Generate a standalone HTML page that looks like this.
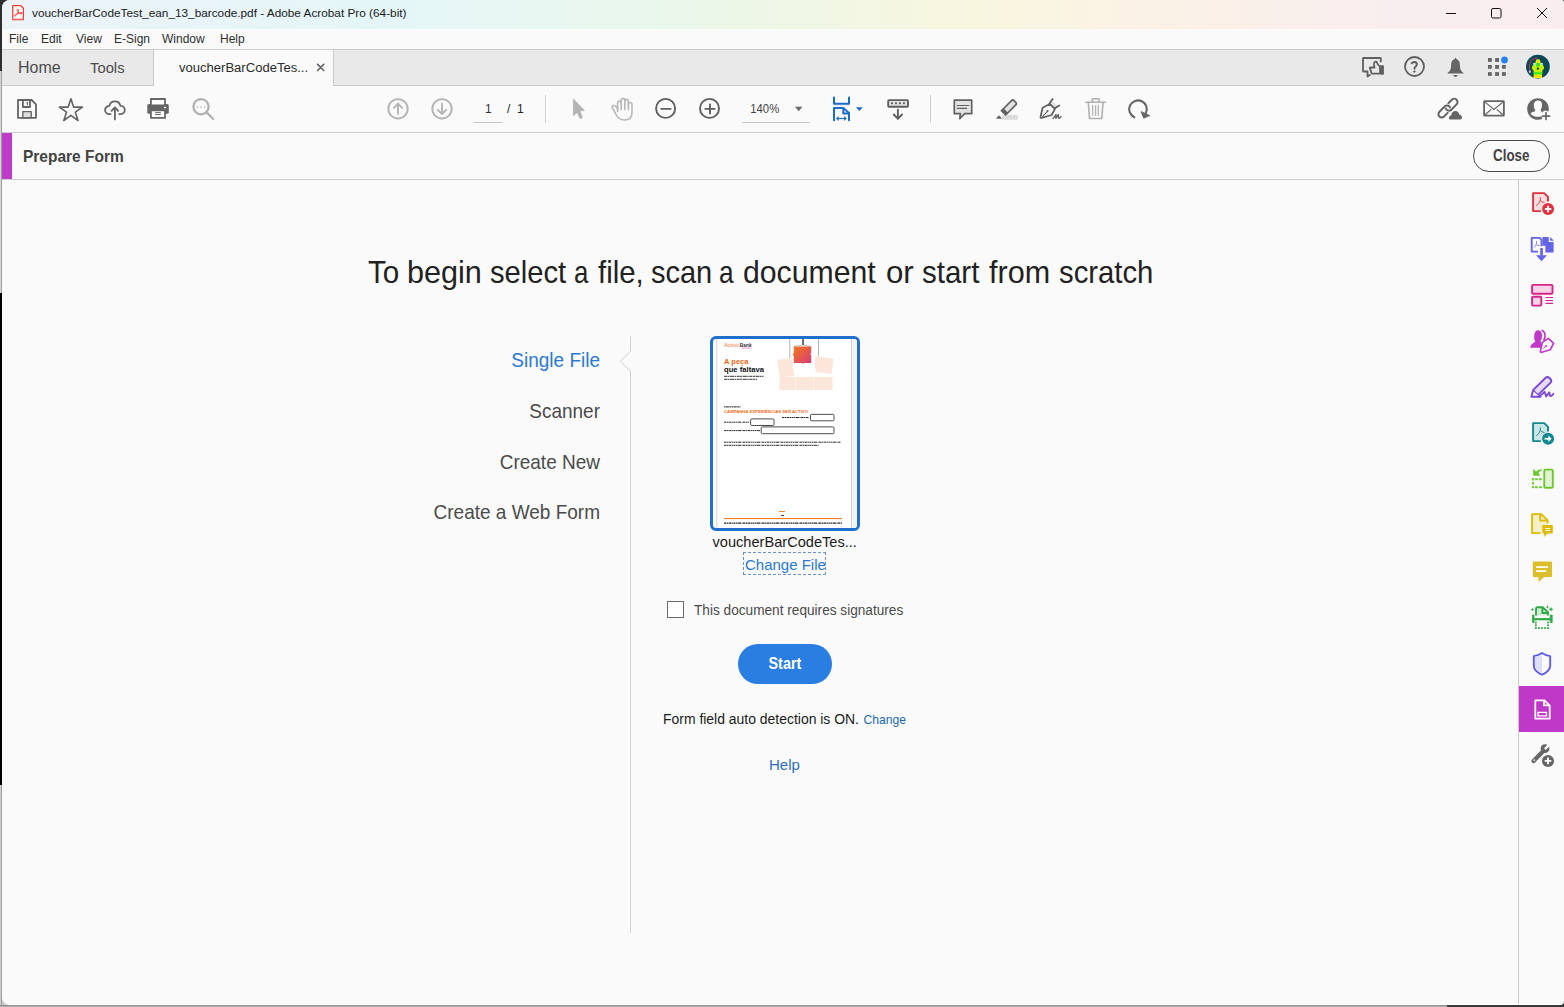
<!DOCTYPE html>
<html><head><meta charset="utf-8">
<style>
*{margin:0;padding:0;box-sizing:border-box}
html,body{width:1564px;height:1007px;overflow:hidden;background:#c9c9c9}
body{font-family:"Liberation Sans",sans-serif;position:relative}
.a{position:absolute;white-space:nowrap;line-height:1}
svg{position:absolute;overflow:visible}
#edge{position:absolute;left:0;top:0;width:2px;height:1007px;background:linear-gradient(180deg,#2e2e2e 0,#2e2e2e 71px,#d4d4d4 71px,#d4d4d4 293px,#000 293px,#000 785px,#cccccc 785px)}
#edge2{position:absolute;left:1px;top:71px;width:1px;height:222px;background:#a0a0a0}
#edge3{position:absolute;left:1px;top:785px;width:1px;height:221px;background:#a0a0a0}
#trc{position:absolute;left:1554px;top:0;width:10px;height:10px;background:#333}
#tlc{position:absolute;left:0;top:0;width:12px;height:12px;background:#2e2e2e}
#win{position:absolute;left:2px;top:0;width:1562px;height:1005px;background:#fafafa;border-radius:8px 3px 4px 8px;overflow:hidden;border-bottom:1px solid #fdfdfd}
#bot1{position:absolute;left:0;top:1005px;width:1447px;height:1px;background:#959595}
#bot2{position:absolute;left:0;top:1006px;width:1447px;height:1px;background:#ababab}
#bot3{position:absolute;left:1447px;top:995px;width:117px;height:12px;background:#3a3a3a}
#title{position:absolute;left:0;top:0;width:1562px;height:29px;background:linear-gradient(90deg,#ebf3f9 0%,#e8f4f9 12%,#e4f6f8 25%,#ebf7e9 45%,#f8f6df 62%,#fbf2e5 72%,#f9eeee 88%,#f9edf0 100%)}
#menu{position:absolute;left:0;top:29px;width:1562px;height:20px;background:#fafafa}
#tabbar{position:absolute;left:0;top:49px;width:1562px;height:37px;background:#e9e9e9;border-top:1px solid #cfcfcf;border-bottom:1px solid #cacaca}
#acttab{position:absolute;left:151px;top:49px;width:181px;height:37px;background:#fafafa;border-left:1px solid #cacaca;border-right:1px solid #cacaca;border-top:1px solid #cfcfcf}
#tool{position:absolute;left:0;top:86px;width:1562px;height:47px;background:#fafafa;border-bottom:1px solid #cdcdcd}
#prep{position:absolute;left:0;top:133px;width:1562px;height:47px;background:#fafafa;border-bottom:1px solid #cdcdcd}
#purp{position:absolute;left:0;top:133px;width:10px;height:46px;background:#c03bc9}
#rside{position:absolute;left:1516px;top:180px;width:1px;height:825px;background:#cbcbcb}
#vline{position:absolute;left:628px;top:336px;width:1px;height:597px;background:#d0d0d0}
.menu{font-size:12px;color:#2e2e2e;top:33px}
.tabt{font-size:16px;color:#4b4b4b;top:60px}
.opt{font-size:19px;color:#4b4b4b;text-align:right;right:964px;transform:scaleY(1.1);transform-origin:0 0}
</style></head><body>
<div id="edge"></div><div id="edge2"></div><div id="edge3"></div><div id="trc"></div><div id="tlc"></div><div id="bot1"></div><div id="bot2"></div><div id="bot3"></div>
<div id="win">
  <div id="title"></div>
  <div id="menu"></div>
  <div id="tabbar"></div>
  <div id="acttab"></div>
  <div id="tool"></div>
  <div id="prep"></div>
  <div id="purp"></div>
  <div id="rside"></div>
  <div id="vline"></div>
</div>
<!-- notch -->
<svg style="left:0;top:0" width="1564" height="1007" viewBox="0 0 1564 1007">
<path d="M630.5,351 L620.5,361.3 L630.5,371.5" fill="#fafafa" stroke="#d0d0d0" stroke-width="1"/>
<path d="M630.5,351.8 V370.8" stroke="#fafafa" stroke-width="1.2"/>
</svg>
<!-- title text -->
<div class="a" id="ttl" style="left:32px;top:8px;font-size:11.8px;color:#1a1a1a">voucherBarCodeTest_ean_13_barcode.pdf - Adobe Acrobat Pro (64-bit)</div>
<!-- menu -->
<div class="a menu" style="left:9px">File</div>
<div class="a menu" style="left:41px">Edit</div>
<div class="a menu" style="left:76px">View</div>
<div class="a menu" style="left:114px">E-Sign</div>
<div class="a menu" style="left:162px">Window</div>
<div class="a menu" style="left:220px">Help</div>
<!-- tabs -->
<div class="a tabt" style="left:18px">Home</div>
<div class="a tabt" style="left:90px;font-size:14.8px;top:61px">Tools</div>
<div class="a" style="left:179px;top:61px;font-size:13.05px;color:#2c2c2c">voucherBarCodeTes...</div>
<svg style="left:0;top:0" width="1564" height="1007" viewBox="0 0 1564 1007"><path d="M317.6,64.4 L323.7,70.5 M323.7,64.4 L317.6,70.5" stroke="#666" stroke-width="1.7" stroke-linecap="round"/></svg>
<!-- toolbar text -->
<div class="a" style="left:485px;top:103px;font-size:12px;color:#333">1</div>
<div class="a" style="left:507px;top:103px;font-size:12px;color:#222">/&nbsp;&nbsp;1</div>
<div class="a" style="left:750.3px;top:103px;font-size:11.3px;color:#444;transform:scaleY(1.06);transform-origin:0 0">140%</div>
<!-- prepare form -->
<div class="a" style="left:23px;top:147.6px;font-size:15.5px;font-weight:bold;color:#434343;transform:scaleY(1.1);transform-origin:0 0">Prepare Form</div>
<div class="a" style="left:1473px;top:140px;width:77px;height:32px;border:1.4px solid #4a4a4a;border-radius:16px"></div>
<div class="a" style="left:1493px;top:148px;font-size:13.4px;font-weight:bold;color:#434343;transform:scaleY(1.19);transform-origin:0 0">Close</div>

<!-- main -->
<div class="a" id="h1" style="left:0;top:256.75px;width:1564px;height:40px;font-size:29.7px;color:#222;transform:scaleY(1.05);transform-origin:0 0"><span class="a" style="left:367.76px;top:0;transform:scaleX(0.996);transform-origin:0 0">To</span><span class="a" style="left:407.42px;top:0;transform:scaleX(1.030);transform-origin:0 0">begin</span><span class="a" style="left:490.44px;top:0;transform:scaleX(0.981);transform-origin:0 0">select</span><span class="a" style="left:574.23px;top:0;transform:scaleX(0.869);transform-origin:0 0">a</span><span class="a" style="left:598.44px;top:0;transform:scaleX(0.989);transform-origin:0 0">file,</span><span class="a" style="left:650.84px;top:0;transform:scaleX(0.976);transform-origin:0 0">scan</span><span class="a" style="left:718.50px;top:0;transform:scaleX(0.884);transform-origin:0 0">a</span><span class="a" style="left:743.26px;top:0;transform:scaleX(1.018);transform-origin:0 0">document</span><span class="a" style="left:886.37px;top:0;transform:scaleX(1.050);transform-origin:0 0">or</span><span class="a" style="left:922.29px;top:0;transform:scaleX(0.994);transform-origin:0 0">start</span><span class="a" style="left:989.26px;top:0;transform:scaleX(1.029);transform-origin:0 0">from</span><span class="a" style="left:1058.59px;top:0;transform:scaleX(0.986);transform-origin:0 0">scratch</span></div>
<div class="a opt" style="top:348.65px;color:#2b79d1">Single File</div>
<div class="a opt" style="top:399.65px">Scanner</div>
<div class="a opt" style="top:450.65px">Create New</div>
<div class="a opt" style="top:500.95px">Create a Web Form</div>

<div class="a" style="left:712.5px;top:535px;font-size:14.6px;color:#1a1a1a">voucherBarCodeTes...</div>
<div class="a" style="left:743px;top:552px;width:83px;height:23px;border:1px dashed #6a94c8"></div>
<div class="a" style="left:745px;top:557px;font-size:15px;color:#2b79d1">Change File</div>

<div class="a" style="left:667px;top:601px;width:17px;height:17px;border:1px solid #6a6a6a;background:#fff"></div>
<div class="a" id="sigt" style="left:694px;top:602.66px;font-size:13.65px;color:#4b4b4b;transform:scaleY(1.12);transform-origin:0 0">This document requires signatures</div>
<div class="a" style="left:738px;top:644px;width:94px;height:40px;border-radius:20px;background:#2a7ee2"></div>
<div class="a" style="left:768.5px;top:655.15px;font-size:14.4px;font-weight:bold;color:#fff;transform:scaleY(1.14);transform-origin:0 0">Start</div>
<div class="a" id="fft" style="left:663px;top:713px;font-size:13.95px;color:#1a1a1a">Form field auto detection is ON.</div>
<div class="a" style="left:863.5px;top:714px;font-size:12.15px;color:#2468b4">Change</div>
<div class="a" style="left:769px;top:757px;font-size:15px;color:#2c6fc2">Help</div>

<!-- thumbnail -->
<div class="a" style="left:710px;top:336px;width:150px;height:195px;border:3px solid #1f6fcc;border-radius:6px;background:#fff;overflow:hidden">
 <div class="a" style="left:138.5px;top:0;width:10px;height:195px;background:#f4f4f4"></div>
</div>
<svg style="left:0;top:0" width="1564" height="1007" viewBox="0 0 1564 1007">
<path d="M716.8,339 V528 M851.5,339 V528" stroke="#c8c8c8" stroke-width="0.8"/>
<!-- logo -->
<text x="724" y="347" font-family="Liberation Sans" font-size="5.6" fill="#f07a3a" textLength="15.5" lengthAdjust="spacingAndGlyphs">Activo</text>
<text x="739.8" y="347" font-family="Liberation Sans" font-size="5.6" font-weight="bold" fill="#333" textLength="12" lengthAdjust="spacingAndGlyphs">Bank</text>
<rect x="741.5" y="347.6" width="10" height="1.1" fill="#f0a0d0"/>
<text x="724" y="364.2" font-family="Liberation Sans" font-size="7" font-weight="bold" fill="#f06a14" textLength="24.5" lengthAdjust="spacingAndGlyphs">A peça</text>
<text x="724" y="372.2" font-family="Liberation Sans" font-size="7" font-weight="bold" fill="#111" textLength="40" lengthAdjust="spacingAndGlyphs">que faltava</text>
<g stroke="#333" stroke-width="1" stroke-dasharray="3 0.5 2 0.6 4 0.5 1.5 0.6">
 <path d="M724,376.3 H763.5"/>
 <path d="M724,379.3 H757"/>
</g>
<!-- puzzle -->
<path d="M789.8,339 V358.5 M818.5,339 V356" stroke="#666" stroke-width="0.5"/>
<path d="M803,339 V345" stroke="#111" stroke-width="1.2"/>
<path d="M777,360 L791,358 L793,365.5 Q791.5,366.5 793,368.5 L794.5,375.5 L780,377.5 Z" fill="#fbe6d9"/>
<path d="M815.5,356 L833.5,358.8 L831.5,374 L815,372 Q816.8,369.5 814.5,367.5 Z" fill="#fbe6d9"/>
<path d="M779.5,377 H832.5 V390 H779.5 Z" fill="#fbe6d9"/>
<path d="M795.5,377 V390 M813.5,377 V390" stroke="#fff" stroke-width="0.5"/>
<defs><linearGradient id="pz" x1="0" y1="0" x2="1" y2="1"><stop offset="0" stop-color="#f27a1c"/><stop offset="1" stop-color="#d83a78"/></linearGradient></defs>
<path d="M793.8,346.4 H811.2 V352.8 Q809.6,354.2 811.2,355.6 V363 H804 Q803,364.4 802,363 H793.8 V355.8 Q791.8,354.6 793.8,353 Z" fill="url(#pz)"/>
<path d="M793.8,346.4 L803,345 L811.2,346.4" stroke="#666" stroke-width="0.4" fill="none"/>
<!-- campaign -->
<path d="M724,406.9 H740.5" stroke="#222" stroke-width="1" stroke-dasharray="1.5 0.4 3 0.5 2 0.4"/>
<text x="724" y="412.6" font-family="Liberation Sans" font-size="4.4" font-weight="bold" fill="#f06a14" textLength="84" lengthAdjust="spacingAndGlyphs">CAMPANHA EXPERIÊNCIAS SER ACTIVO</text>
<g fill="none" stroke="#222" stroke-width="0.8">
 <rect x="810.5" y="414.4" width="23.5" height="6.4" rx="1.2"/>
 <rect x="750.6" y="418.9" width="23.4" height="6.6" rx="1.2"/>
 <rect x="761.2" y="426.9" width="72.8" height="6.8" rx="1.2"/>
</g>
<g stroke="#2a2a2a" stroke-width="1" stroke-dasharray="2 0.5 1.5 0.5 3 0.6 1 0.4">
 <path d="M782,417.5 H809"/>
 <path d="M724,422.2 H749"/>
 <path d="M724,430.6 H760"/>
 <path d="M724,442.2 H841"/>
 <path d="M724,445.3 H819"/>
 <path d="M724,523.2 H842" stroke-width="1.3"/>
</g>
<rect x="781" y="515" width="3" height="0.9" fill="#333"/>
<rect x="779" y="511" width="6" height="0.9" fill="#f07a1c"/>
<rect x="724" y="518" width="118" height="1.1" fill="#f07a1c"/>
</svg>

<svg style="left:0;top:0" width="1564" height="1007" viewBox="0 0 1564 1007">
<!-- pdf app icon -->
<g>
<path d="M12.8,5.6 H20.8 L23.4,8.2 V19.6 H12.8 Z" fill="#fff" stroke="#ea3b32" stroke-width="1.25" stroke-linejoin="round"/>
<rect x="13.5" y="18.2" width="9.2" height="1.2" fill="#f5b5b0"/>
<path d="M14.6,15.8 C15.3,16.3 16.2,15.6 17,14.4 C17.9,13 18.6,11.5 18.6,10.3 C18.6,9.1 17.4,8.7 17.1,9.6 C16.8,10.6 17.6,12.4 19.4,13.3 C20.5,13.9 21.6,14 22.1,13.6 C22.6,13.1 21.9,12.5 21,12.6 C19.2,12.8 16.8,13.6 15.3,14.6 C14.5,15.1 14.3,15.5 14.6,15.8 Z" fill="none" stroke="#ea3b32" stroke-width="0.95"/>
</g>
<!-- window controls -->
<path d="M1446,13.5 H1456" stroke="#111" stroke-width="1"/>
<rect x="1491.5" y="8.5" width="9.5" height="9.5" rx="1.5" fill="none" stroke="#111" stroke-width="1"/>
<path d="M1537,8 L1547,18 M1547,8 L1537,18" stroke="#111" stroke-width="1"/>

<!-- tabbar right icons -->
<g fill="none" stroke="#5f5f5f" stroke-width="1.8" stroke-linejoin="round">
 <path d="M1380.8,62.3 V58.5 Q1380.8,58 1380.3,58 H1363.5 Q1363,58 1363,58.5 V71 Q1363,71.5 1363.5,71.5 H1367.5 V76.5 L1370.5,74.5"/>
 <path d="M1369.8,67.5 H1374.5 Q1373.2,63 1375,61.8 Q1376.5,61 1377,62.6 Q1377.6,65 1380,66.5 V73.6 H1372.5 Q1371.7,73.6 1371.3,72.6 Z"/>
 <circle cx="1414.5" cy="66.5" r="9.5"/>
</g>
<rect x="1380.2" y="65.3" width="3.7" height="9.5" rx="0.8" fill="#5f5f5f"/>
<path d="M1411.6,63.2 Q1412.3,62 1414.5,62 Q1417,62.2 1416.9,64.3 Q1416.7,65.5 1415.4,66.7 Q1414.5,67.6 1414.5,68.7" fill="none" stroke="#5f5f5f" stroke-width="1.9" stroke-linecap="round"/>
<rect x="1413.4" y="70.6" width="2" height="2" fill="#5f5f5f" transform="rotate(45 1414.4 71.6)"/>
<!-- bell -->
<path d="M1455.5,57.8 Q1456.3,57.8 1456.3,59 Q1459.5,60 1459.8,63.5 L1460.2,68.5 Q1460.6,71 1463.5,73 V73.6 H1447.5 V73 Q1450.4,71 1450.8,68.5 L1451.2,63.5 Q1451.5,60 1454.7,59 Q1454.7,57.8 1455.5,57.8 Z" fill="#666"/>
<path d="M1453.2,75 H1457.8 Q1457,77 1455.5,77 Q1454,77 1453.2,75 Z" fill="#666"/>
<!-- apps grid -->
<g fill="#666">
 <rect x="1488" y="58" width="3.8" height="3.9"/><rect x="1495.1" y="58" width="3.9" height="3.9"/>
 <rect x="1488" y="65" width="3.8" height="3.8"/><rect x="1495.1" y="65" width="3.9" height="3.8"/><rect x="1502" y="65" width="3.8" height="3.8"/>
 <rect x="1488" y="72.1" width="3.8" height="3.8"/><rect x="1495.1" y="72.1" width="3.9" height="3.8"/><rect x="1502" y="72.1" width="3.8" height="3.8"/>
</g>
<circle cx="1504.5" cy="60" r="3.4" fill="#2680eb"/>
<!-- avatar -->
<circle cx="1537.9" cy="66.6" r="11.9" fill="#074955"/>
<path d="M1536.1,59.6 H1540 L1540.8,64 L1543.6,65.8 L1544.2,68.4 L1542.4,70.6 L1542,77.8 H1533.8 L1533.5,70.6 L1531.8,68.4 L1532.4,65.8 L1535.2,64 Z" fill="#c4f000"/>
<path d="M1536.6,59.8 H1539.4 L1539.8,63 H1536.2 Z" fill="#f8e800"/>
<path d="M1536.4,63 H1539.6 L1539.6,66 Q1538,67 1536.4,66 Z" fill="#28e028"/>
<rect x="1533.6" y="72.2" width="8.5" height="2.2" fill="#38e820"/>
<rect x="1533.8" y="75.2" width="8.2" height="2.8" fill="#ffe000"/>
<circle cx="1534.5" cy="64.1" r="1.3" fill="#f4fff0"/><circle cx="1541.5" cy="64.1" r="1.3" fill="#f4fff0"/>
<circle cx="1534.8" cy="64.2" r="0.6" fill="#30d030"/><circle cx="1541.2" cy="64.2" r="0.6" fill="#30d030"/>
<circle cx="1537.9" cy="68.6" r="1.2" fill="#074955"/>
<path d="M1537.3,58 Q1531,58.6 1529.6,64.2 L1529.4,69.6" fill="none" stroke="#ee2a5a" stroke-width="0.9"/>
<ellipse cx="1529.9" cy="71.6" rx="1.1" ry="1.5" fill="#f5a0e8"/>
</svg>

<svg style="left:0;top:0" width="1564" height="1007" viewBox="0 0 1564 1007">
<g fill="none" stroke="#646464" stroke-width="1.8" stroke-linejoin="round" stroke-linecap="round">
 <!-- save -->
 <path d="M18,100 H31.6 L36,104.4 V117.8 H18 Z"/>
 <path d="M22.9,100.2 V107 H30 V100.2"/>
 <path d="M27.4,102.3 V104.6" stroke-width="1.2"/>
 <rect x="22.8" y="111.6" width="8.4" height="6.2" fill="#dedede" stroke-width="1.4"/>
 <!-- star -->
 <path d="M70.9,98.8 L73.6,107.1 L82.4,107.1 L75.3,112.2 L78,120.5 L70.9,115.4 L63.8,120.5 L66.5,112.2 L59.4,107.1 L68.2,107.1 Z" stroke-width="1.6"/>
 <!-- upload cloud -->
 <path d="M110.6,114.1 H109 A4.1,4.1 0 0 1 109.4,105.9 A5.6,5.6 0 0 1 120.4,105.9 A4.1,4.1 0 0 1 120.9,114.1 H119.2"/>
 <path d="M114.9,119.4 V107.3 M111.6,110.8 L114.9,107.3 L118.2,110.8"/>
</g>
<!-- print -->
<rect x="147.3" y="104.1" width="21.5" height="9.7" rx="1.6" fill="#656565"/>
<rect x="150.9" y="99" width="14.1" height="6.4" fill="#fff" stroke="#656565" stroke-width="1.8" stroke-linejoin="round"/>
<rect x="150.9" y="110.4" width="14.1" height="7.5" fill="#fff" stroke="#656565" stroke-width="1.8" stroke-linejoin="round"/>
<path d="M155.2,112.6 H160.8 M155.2,114.5 H160.8" stroke="#656565" stroke-width="1"/>
<rect x="163.9" y="106.9" width="2.2" height="1.3" fill="#fff"/>
<!-- search dots -->
<g fill="none" stroke="#b0b0b0" stroke-width="2.2" stroke-linecap="round">
 <circle cx="201" cy="106.7" r="7.6"/>
 <path d="M206.8,112.6 L213.2,119"/>
</g>
<g fill="#b0b0b0"><circle cx="197.6" cy="107" r="0.8"/><circle cx="201.1" cy="107" r="0.8"/><circle cx="204.8" cy="107" r="0.8"/></g>
<!-- up/down circles -->
<g fill="none" stroke="#b4b4b4" stroke-width="1.9" stroke-linecap="round" stroke-linejoin="round">
 <circle cx="398" cy="108.8" r="9.7"/>
 <path d="M398,113.8 V103.8 M393.9,107.8 L398,103.7 L402.1,107.8"/>
 <circle cx="442" cy="108.8" r="9.7"/>
 <path d="M442,103.6 V113.8 M437.8,109.8 L442,114 L446.2,109.8"/>
</g>
<!-- page number -->
<path d="M474,122.5 H502" stroke="#c4c4c4" stroke-width="1"/>
<path d="M545.5,95 V123" stroke="#cfcfcf" stroke-width="1"/>
<!-- cursor -->
<path d="M573.3,98.8 L584.6,110.5 L579.9,111 L582.3,116.7 Q582.4,118.3 581,118.5 Q579.8,118.6 579.3,117.5 L577.2,112.5 L573.4,115.9 Z" fill="#b4b4b4" stroke="#b4b4b4" stroke-width="0.6" stroke-linejoin="round"/>
<!-- hand -->
<g fill="none" stroke="#b8b8b8" stroke-width="1.6" stroke-linejoin="round" stroke-linecap="round">
 <path d="M617.6,111.6 V103.3 Q617.6,101 619.4,101 Q621.2,101 621.2,103 V109.6"/>
 <path d="M621.2,103 V100.4 Q621.2,98.4 623,98.4 Q624.8,98.4 624.8,100.4 V109.6"/>
 <path d="M624.8,101.4 Q624.8,99.4 626.6,99.4 Q628.4,99.4 628.4,101.6 V109.6"/>
 <path d="M628.4,104.6 Q628.4,102.5 630.2,102.5 Q632,102.5 632,104.6 V112.5 Q632,120 624.5,120 Q618.5,120 615.2,113 L612.4,108 Q611.8,106.3 613.4,105.6 Q614.9,105.1 616.2,106.8 L617.6,109.2"/>
</g>
<!-- zoom out / in -->
<g fill="none" stroke="#5f5f5f" stroke-width="1.9" stroke-linecap="round">
 <circle cx="665.6" cy="108.4" r="9.5"/>
 <path d="M661.2,108.9 H670.6"/>
 <circle cx="709.5" cy="108.4" r="9.5"/>
 <path d="M705.4,108.9 H714.6 M710,104.4 V113.5"/>
</g>
<!-- zoom field -->
<path d="M742,122.5 H810" stroke="#c4c4c4" stroke-width="1"/>
<path d="M795,106.8 H802.4 L798.7,111.2 Z" fill="#6a6a6a"/>
<!-- blue fit -->
<g fill="none" stroke="#1a6bca" stroke-width="2" stroke-linejoin="round" stroke-linecap="round">
 <path d="M834,97.6 V103.8 H849 V97.6"/>
 <path d="M834,120.2 V107.9 H843.3 L849,113 V120.2"/>
 <path d="M843.3,108 V113.6 H849"/>
</g>
<path d="M836.8,118.5 H846" stroke="#1a6bca" stroke-width="1.2"/>
<path d="M836,118.5 L838.6,116.1 V120.9 Z M846.8,118.5 L844.2,116.1 V120.9 Z" fill="#1a6bca"/>
<path d="M834,105.6 H849" stroke="#cfe0f5" stroke-width="0.8"/>
<path d="M855.9,107.2 H862.8 L859.35,111.1 Z" fill="#1a6bca"/>
<!-- keyboard down -->
<rect x="888.2" y="100.1" width="19.8" height="6.6" rx="0.8" fill="#e4e4e4" stroke="#5f5f5f" stroke-width="1.9"/>
<g fill="#5f5f5f"><rect x="891" y="102.3" width="1.9" height="1.9"/><rect x="895" y="102.3" width="1.9" height="1.9"/><rect x="899" y="102.3" width="1.9" height="1.9"/><rect x="903" y="102.3" width="1.9" height="1.9"/></g>
<path d="M897.9,109.6 V118.6 M893.8,114.5 L897.9,118.8 L902,114.5" fill="none" stroke="#5f5f5f" stroke-width="1.9" stroke-linecap="round" stroke-linejoin="round"/>
<path d="M930.5,95 V122.6" stroke="#cfcfcf" stroke-width="1"/>
<!-- comment -->
<path d="M954.3,100.1 H971.7 V113.7 H964.7 L959.8,118.6 L960.4,113.7 H954.3 Z" fill="#e2e2e2" stroke="#626262" stroke-width="1.7" stroke-linejoin="round"/>
<path d="M957.3,105.5 H968.6 M957.3,108.4 H966.7" stroke="#626262" stroke-width="1.1" stroke-linecap="round"/>
<!-- highlighter -->
<rect x="1001.7" y="114.9" width="16.1" height="4.8" fill="#dcdcdc"/>
<g transform="translate(1009.8,106.6) rotate(-45)">
 <path d="M-6.4,-3 H5.4 Q7.2,-3 7.2,-1.2 V1.2 Q7.2,3 5.4,3 H-6.4 Z" fill="#e2e2e2" stroke="#626262" stroke-width="1.7" stroke-linejoin="round"/>
 <path d="M-9.6,-3.8 H-6 V3.8 H-9.6 Z" fill="#626262"/>
</g>
<path d="M996,118.7 L998.8,115.2 L1001.8,118.2 L1001.2,118.7 Z" fill="#626262"/>
<!-- pen sign -->
<path d="M1049.5,103.6 L1052.6,99" stroke="#626262" stroke-width="1.8" stroke-linecap="round"/>
<path d="M1052.8,101.8 L1058,106.6 L1055.4,108.6 L1050.6,104.2 Z" fill="#e0e0e0"/>
<path d="M1054.4,108.6 L1059.2,105.5" stroke="#626262" stroke-width="1.8" stroke-linecap="round"/>
<path d="M1049.8,104 L1054.9,108.9 L1051.7,115 L1041.8,117.8 Q1040,118 1040.6,116.5 L1042.6,107.8 Z" fill="none" stroke="#626262" stroke-width="1.8" stroke-linejoin="round"/>
<path d="M1042.3,116.7 L1047.3,111.6" stroke="#626262" stroke-width="1.1"/>
<circle cx="1047.5" cy="111" r="1.1" fill="#626262"/>
<path d="M1053,118.6 L1056,114.6 L1055.8,118.4 L1058.3,114.6 L1058.6,118.2 Q1059.8,118.3 1061,116.6" fill="none" stroke="#626262" stroke-width="1.4" stroke-linejoin="round" stroke-linecap="round"/>
<!-- trash -->
<g fill="none" stroke="#b0b0b0" stroke-width="1.6" stroke-linejoin="round" stroke-linecap="round">
 <path d="M1092.3,101.6 V99.5 Q1092.3,98.8 1093,98.8 H1098.4 Q1099.1,98.8 1099.1,99.5 V101.6"/>
 <path d="M1085.8,102.2 H1105.3"/>
 <path d="M1088.3,102.6 L1089.5,118.5 H1101.8 L1103,102.6"/>
 <path d="M1092.6,105.6 L1092.8,115.3 M1095.6,105.6 V115.3 M1098.4,105.6 L1098.2,115.3" stroke-width="1.2"/>
</g>
<!-- rotate -->
<path d="M1134.3,117.2 A8.8,8.8 0 1 1 1145.8,113.2" fill="none" stroke="#666" stroke-width="2.1" stroke-linecap="round"/>
<path d="M1141,111.6 L1149.8,115.6 L1143.7,118.2 Z" fill="#666" stroke="#666" stroke-width="0.8" stroke-linejoin="round"/>
<!-- link cloud -->
<g fill="none" stroke="#666" stroke-width="2" stroke-linecap="round">
 <path transform="translate(1451.6,104.7) rotate(-45)" d="M-1.3,-3.3 H3.75 A3.3,3.3 0 0 1 3.75,3.3 H-3.75 A3.3,3.3 0 0 1 -6.8,-1.3"/>
 <path transform="translate(1444.4,111.5) rotate(-45)" d="M6.88,1.1 A3.3,3.3 0 0 0 3.75,-3.3 H-3.75 A3.3,3.3 0 0 0 -3.75,3.3 H1.34"/>
</g>
<path d="M1450.2,119.6 Q1448.9,119.6 1448.9,118 Q1449,115.8 1451.2,115.3 Q1452,111.1 1455.5,111.1 Q1458.6,111.3 1459.3,114.6 Q1462,115.1 1462,117.4 Q1462,119.6 1459.8,119.6 Z" fill="#666"/>
<!-- mail -->
<rect x="1484.1" y="101.1" width="19.8" height="14.6" rx="0.6" fill="none" stroke="#666" stroke-width="1.8"/>
<path d="M1484.5,101.6 L1494,109.5 L1503.5,101.6 M1484.6,115.3 L1491.2,109.4 M1503.4,115.3 L1496.8,109.4" fill="none" stroke="#666" stroke-width="1.2"/>
<!-- person add -->
<path d="M1538,98.2 A10.8,10.8 0 0 0 1538,119.8 Q1540.2,119.8 1542.3,119 L1541.5,116.3 Q1540,116.8 1538,116.8 Q1532.8,116.8 1530.4,113.4 Q1531.4,112.3 1533.5,111.8 Q1535.2,111.4 1535.3,110.2 Q1533.6,107.8 1533.8,104.8 Q1534.2,100.6 1538.1,100.5 Q1541.8,100.6 1542.1,104.6 Q1542.3,107.6 1540.7,110 Q1541,111.5 1542.2,112.4 Q1543.8,110.2 1546.2,110.7 L1548.4,111.6 Q1548.8,110.3 1548.8,109 A10.8,10.8 0 0 0 1538,98.2 Z" fill="#666"/>
<path d="M1546,112.7 V119.5 M1542.5,116.1 H1549.6" stroke="#666" stroke-width="1.7" stroke-linecap="round"/>
</svg>

<svg style="left:0;top:0" width="1564" height="1007" viewBox="0 0 1564 1007">
<!-- 1 create pdf (red) y192-214 -->
<path d="M1540.9,211.1 H1533.1 V193.1 H1544.2 L1548,196.9 V201.5" fill="#f8dde0" stroke="#e0313d" stroke-width="1.9" stroke-linejoin="round"/>
<path d="M1536.3,205.8 Q1539.5,203.6 1540.3,200.2 L1540.3,197.2 M1540.3,200.4 Q1541.5,202.3 1544.5,202.5" fill="none" stroke="#e0313d" stroke-width="0.9"/>
<circle cx="1548.1" cy="209" r="6" fill="#e0313d"/>
<path d="M1548.1,205.8 V212.2 M1544.9,209 H1551.3" stroke="#fff" stroke-width="1.9"/>
<!-- 2 combine (blue-violet) y237-261 -->
<path d="M1538,251.6 H1531.7 V237.9 H1539.8 L1541.5,240 V246.3" fill="none" stroke="#6464e8" stroke-width="1.9" stroke-linejoin="round"/>
<path d="M1534,247.5 Q1536.3,246 1536.5,243.2 V241.2 M1536.6,244.7 Q1537.6,245.6 1539.7,245.7" fill="none" stroke="#6464e8" stroke-width="0.8"/>
<path d="M1542.4,237.1 H1548.8 V241.9 H1553.6 V252.5 H1545.4 V245.7 H1542.4 Z" fill="#6464e8"/>
<path d="M1550.2,237.1 L1553.9,240.8 H1550.2 Z" fill="#6464e8"/>
<rect x="1540.2" y="248.1" width="2.7" height="7.6" fill="#6464e8"/>
<path d="M1536,255.2 H1547 L1541.5,261.2 Z" fill="#6464e8"/>
<!-- 3 organize/forms (magenta) y284-306 -->
<rect x="1532.1" y="284.9" width="20.4" height="8.8" rx="1" fill="#f5d4e6" stroke="#d9238b" stroke-width="1.9"/>
<rect x="1532.1" y="296.7" width="9.2" height="8.9" rx="1" fill="#f5d4e6" stroke="#d9238b" stroke-width="1.9"/>
<path d="M1545.5,297.5 H1553 M1545.5,300.5 H1553 M1545.5,303.4 H1553" stroke="#d9238b" stroke-width="1.1"/>
<!-- 4 request signatures (purple) y330-352 -->
<path d="M1538.2,330.2 Q1542,330.6 1542,335.8 Q1542,339.5 1540.5,341 L1541.4,342.4 L1540.8,347.8 L1539.2,347.8 H1530.2 Q1530.6,344 1535.3,341.8 Q1533.7,339.7 1534.2,335.3 Q1534.8,330.2 1538.2,330.2 Z" fill="#c038c8"/>
<path d="M1541.6,330.2 Q1545.6,331.5 1545,337 Q1544.6,339.6 1543.3,340.3" fill="none" stroke="#c038c8" stroke-width="1.7"/>
<path d="M1548.4,338.4 L1553.6,343.3 L1550.2,349.8 L1541.8,352.3 Q1540.1,352.4 1540.5,350.6 L1542.4,342.4 Z" fill="none" stroke="#c038c8" stroke-width="1.7" stroke-linejoin="round"/>
<path d="M1543.4,348.6 L1546,345.8" stroke="#c038c8" stroke-width="1"/>
<circle cx="1546" cy="346" r="0.9" fill="#c038c8"/>
<!-- 5 fill & sign (purple) y376-398 -->
<path d="M1538.6,394.4 L1550.4,382.8 Q1552.3,380.9 1550.4,379 L1549.4,378 Q1547.4,376.1 1545.4,378 L1533.1,390.2 Z" fill="#e6dcf6"/>
<path d="M1540.6,396.8 H1531.4 L1533.1,390.2 L1545.4,378 Q1547.4,376.1 1549.4,378 L1550.4,379 Q1552.3,380.9 1550.4,382.8 L1538.6,394.4" fill="none" stroke="#7a46d8" stroke-width="1.9" stroke-linejoin="round" stroke-linecap="round"/>
<path d="M1533.1,390.2 L1538.3,394.6" fill="none" stroke="#7a46d8" stroke-width="1.2"/>
<path d="M1538.4,396.7 Q1541.6,395 1544.6,391.8 L1546.2,396.4 L1549.3,392.4 L1550.1,396 Q1551.8,396.6 1553.3,393.8" fill="none" stroke="#7a46d8" stroke-width="1.8" stroke-linejoin="round" stroke-linecap="round"/>
<!-- 6 export pdf (teal) y422-444 -->
<path d="M1540.9,441.1 H1533.1 V423.1 H1544.2 L1548,426.9 V431.5" fill="#cce6e7" stroke="#14878f" stroke-width="1.9" stroke-linejoin="round"/>
<path d="M1536.3,435.8 Q1539.5,433.6 1540.3,430.2 L1540.3,427.2 M1540.3,430.4 Q1541.5,432.3 1544.5,432.5" fill="none" stroke="#14878f" stroke-width="0.9"/>
<circle cx="1548.1" cy="438.8" r="6" fill="#14878f"/>
<path d="M1544.6,438.8 H1550.2" stroke="#fff" stroke-width="1.7"/>
<path d="M1548.4,435.6 L1551.6,438.8 L1548.4,442 Z" fill="#fff"/>
<!-- 7 edit/organize (green) y468-489 -->
<rect x="1544.3" y="469.6" width="8.5" height="18.2" rx="1.1" fill="#e3f2d7" stroke="#6cc92c" stroke-width="1.9"/>
<path d="M1533.2,469.1 L1536,471.4 Q1538.5,469.4 1541.6,469.3 V470.9 Q1539.4,471.4 1538.6,472.3 L1540,475.8 H1533.2 Z" fill="#6cc92c"/>
<g fill="#6cc92c">
<rect x="1532" y="478" width="1.9" height="2.5"/><rect x="1532" y="482" width="1.9" height="2.5"/><rect x="1532" y="486" width="1.9" height="2.2"/>
<rect x="1535" y="478.3" width="2.8" height="1.9"/><rect x="1539" y="478.3" width="2.8" height="1.9"/>
<rect x="1535" y="486.3" width="2.8" height="1.9"/><rect x="1539" y="486.3" width="2.8" height="1.9"/>
</g>
<!-- 8 comment file (yellow) y513-537 -->
<path d="M1540.6,533.1 H1532.1 V514.1 H1541.2 L1547.6,520.3 V523.5" fill="#f5efc7" stroke="#dcbb00" stroke-width="1.9" stroke-linejoin="round"/>
<path d="M1540.2,514.2 V520.6 H1546.8" fill="none" stroke="#dcbb00" stroke-width="1.9" stroke-linejoin="round"/>
<rect x="1542.3" y="525" width="10.5" height="8.6" rx="0.8" fill="#dcbb00"/>
<path d="M1544,533 L1544.3,537 L1547.5,533 Z" fill="#dcbb00"/>
<path d="M1545.4,528.5 H1550 M1545.4,530.5 H1550" stroke="#fff" stroke-width="1"/>
<!-- 9 comment (yellow) y561-582 -->
<path d="M1533.8,561.5 H1551 Q1552,561.5 1552,562.5 V576 Q1552,577 1551,577 H1544 L1538.8,582 L1538.3,577 H1533.8 Q1532.8,577 1532.8,576 V562.5 Q1532.8,561.5 1533.8,561.5 Z" fill="#dcbd2a"/>
<path d="M1536.2,567.1 H1548 M1536.2,571.1 H1546.2" stroke="#fff" stroke-width="1.9"/>
<!-- 10 scan (green) y605-629 -->
<path d="M1536,615.5 V608.7 Q1536,607.2 1537.5,607.2 H1542.6 L1548,612.2 V615.5" fill="#d3ead6" stroke="#2eaa45" stroke-width="1.9" stroke-linejoin="round"/>
<path d="M1542.4,607.6 V613 H1547.4" fill="none" stroke="#2eaa45" stroke-width="1.9"/>
<path d="M1532.5,615 H1534 V618.5 H1550.2 V615 H1552.2 V622.5 H1550.2 V619.9 H1534 V622.5 H1532.5 Z" fill="#2eaa45" stroke="#2eaa45" stroke-width="0.8"/>
<g fill="#2eaa45">
<rect x="1535" y="621.6" width="1.8" height="1.8"/><rect x="1535" y="624.4" width="1.8" height="1.8"/><rect x="1535" y="627.2" width="1.8" height="1.8"/>
<rect x="1547.1" y="621.6" width="1.8" height="1.8"/><rect x="1547.1" y="624.4" width="1.8" height="1.8"/><rect x="1547.1" y="627.2" width="1.8" height="1.8"/>
<rect x="1538" y="627.2" width="1.8" height="1.8"/><rect x="1541.1" y="627.2" width="1.8" height="1.8"/><rect x="1544.1" y="627.2" width="1.8" height="1.8"/>
</g>
<path d="M1532.4,607.4 L1532.9,609 L1534.4,609.5 L1532.9,610 L1532.4,611.5 L1531.9,610 L1530.4,609.5 L1531.9,609 Z" fill="#2eaa45"/>
<path d="M1547.5,605 L1548,606.4 L1549.3,606.9 L1548,607.4 L1547.5,608.8 L1547,607.4 L1545.7,606.9 L1547,606.4 Z" fill="#2eaa45"/>
<path d="M1551,606.7 L1551.7,608.5 L1553.7,609.2 L1551.7,609.9 L1551,611.7 L1550.3,609.9 L1548.3,609.2 L1550.3,608.5 Z" fill="#2eaa45"/>
<!-- 11 protect (blue violet) y652-675 -->
<path d="M1542,653 Q1538,655.6 1533.8,656.1 V666 Q1534.2,671.6 1542,674.6 Q1549.8,671.6 1550.2,666 V656.1 Q1546,655.6 1542,653 Z" fill="#fafafa" stroke="#5c5ce6" stroke-width="1.9" stroke-linejoin="round"/>
<path d="M1542,654.2 V673.4 Q1535.6,670.6 1535,666 V657 Q1538.6,656.4 1542,654.2 Z" fill="#dedef8"/>
<!-- 12 highlighted prepare form -->
<rect x="1519" y="686" width="45" height="46" fill="#c038c8"/>
<path d="M1535.3,700.4 H1544.5 L1549.7,705.6 V718.7 H1535.3 Z" fill="none" stroke="#fff" stroke-width="1.8" stroke-linejoin="round"/>
<path d="M1544,700.6 V705.4 H1549.4" fill="none" stroke="#fff" stroke-width="1.8"/>
<rect x="1538" y="712.4" width="8.5" height="3.5" fill="none" stroke="#fff" stroke-width="1.3"/>
<!-- 13 tools wrench plus -->
<path d="M1533.5,760.9 L1542.4,752" stroke="#666" stroke-width="4.2" stroke-linecap="round"/>
<circle cx="1534.3" cy="760.1" r="0.9" fill="#fafafa"/>
<circle cx="1545" cy="748.7" r="4.4" fill="#666"/>
<path d="M1545.6,748.4 L1549.6,744.4" stroke="#fafafa" stroke-width="2.6" stroke-linecap="round"/>
<circle cx="1548" cy="760.9" r="6" fill="#666"/>
<path d="M1548,757.6 V764.2 M1544.7,760.9 H1551.3" stroke="#fff" stroke-width="1.9"/>
</svg>

</body></html>
